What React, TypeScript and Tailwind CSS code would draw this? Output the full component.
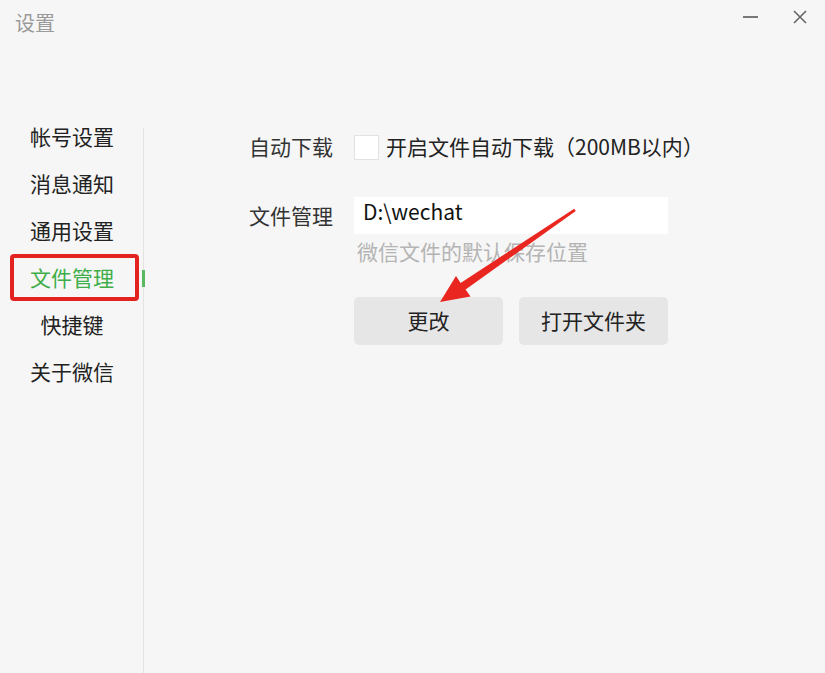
import React from 'react';

const font = { fontFamily: '"Noto Sans CJK SC", "Noto Sans", sans-serif' };

const App: React.FC = () => {
  const navItems = ['帐号设置', '消息通知', '通用设置', '文件管理', '快捷键', '关于微信'];
  const active = '文件管理';

  return (
    <div className="relative w-[825px] h-[673px] overflow-hidden bg-[#f6f6f6] text-[#222]" style={font}>
      {/* Title bar */}
      <div className="flex items-start justify-between h-[113px]">
        <div className="pl-[15px] pt-[8px] text-[20px] leading-[30px] text-[#9a9a9a]">设置</div>
        <div className="flex items-center gap-[34px] pr-[17px] pt-[9px]">
          <span className="block w-[15px] h-[2px] bg-[#777]" />
          <svg width="16" height="16" viewBox="0 0 16 16" className="text-[#666]">
            <path d="M2 2 L14 14 M14 2 L2 14" stroke="currentColor" strokeWidth="1.6" fill="none" />
          </svg>
        </div>
      </div>

      <div className="flex h-[560px]">
        {/* Sidebar */}
        <div className="w-[143px] flex flex-col pl-[10px]">
          {navItems.map(item => (
            <div
              key={item}
              className={`h-[47px] w-[129px] flex items-center justify-center pr-[5px] text-[21px] rounded-[4px] ${
                item === active ? 'text-[#3fae49] border-[4px] border-[#e32320]' : 'text-[#222]'
              }`}
            >
              {item}
            </div>
          ))}
        </div>

        {/* Divider with active marker */}
        <div className="relative w-px mt-[15px] bg-[#e3e3e3]">
          <span className="absolute left-[-1px] top-[142px] w-[3px] h-[17px] bg-[#5ab85f]" />
        </div>

        {/* Content */}
        <div className="flex-1 pl-[105px] pt-[21px]">
          <div className="flex items-center h-[26px]">
            <span className="w-[105px] text-[21px] text-[#333]">自动下载</span>
            <span className="w-[25px] h-[25px] bg-white border border-[#e2e2e2] mt-[1px]" />
            <span className="ml-[7px] text-[21px] text-[#222]">开启文件自动下载（200MB以内）</span>
          </div>

          <div className="flex mt-[37px]">
            <span className="w-[105px] text-[21px] text-[#333] leading-[37px]">文件管理</span>
            <div className="flex flex-col">
              <div className="w-[314px] h-[37px] bg-white pl-[9px] text-[21px] leading-[28px] text-[#111]">
                D:\wechat
              </div>
              <div className="pl-[3px] mt-[2px] text-[21px] leading-[30px] text-[#b4b4b4]">微信文件的默认保存位置</div>
              <div className="flex gap-[16px] mt-[31px]">
                <button className="w-[149px] h-[48px] rounded-[5px] bg-[#e6e6e6] text-[21px] text-[#222]">更改</button>
                <button className="w-[149px] h-[48px] rounded-[5px] bg-[#e6e6e6] text-[21px] text-[#222]">打开文件夹</button>
              </div>
            </div>
          </div>
        </div>
      </div>

      {/* Annotation arrow */}
      <svg className="absolute left-0 top-0 pointer-events-none" width="825" height="673">
        <polygon
          points="575.8,211 465.6,289.5 470.5,296.5 440,302 456,276 460.6,282.9 574.2,208.8"
          fill="#ea2620"
        />
      </svg>
    </div>
  );
};

export default App;
